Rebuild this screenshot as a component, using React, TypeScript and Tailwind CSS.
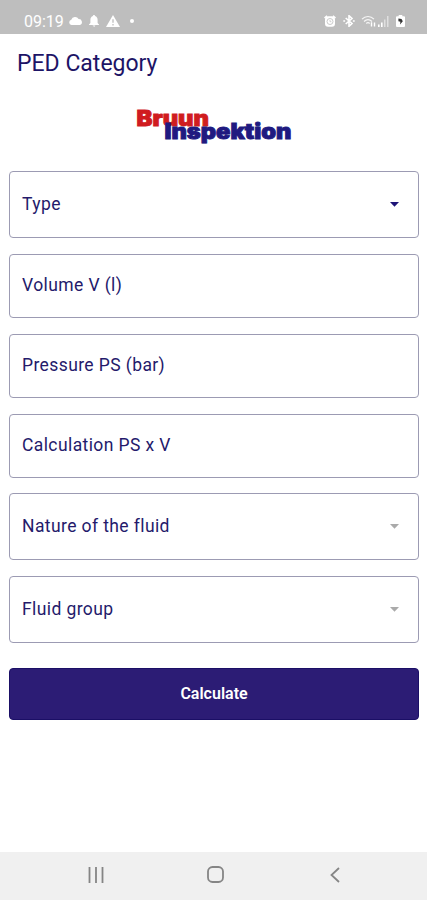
interface FieldProps {
  label: string;
  arrow?: 'active' | 'disabled';
}

function Field({ label, arrow }: FieldProps) {
  return (
    <div
      className={`flex items-center justify-between rounded border border-[#9c9bb3] bg-white pl-3 pr-[19px] ${
        arrow ? 'h-[67px]' : 'h-16'
      }`}
    >
      <span className="-mt-0.5 text-[17.5px] leading-6 tracking-[0.4px] text-[#241a6b]">{label}</span>
      {arrow && (
        <svg
          className={`h-[5px] w-[9px] ${arrow === 'active' ? 'text-[#1e1478]' : 'text-[#aaaaaa]'}`}
          viewBox="0 0 9 5"
          fill="currentColor"
        >
          <path d="M0 0h9L4.5 4.7z" />
        </svg>
      )}
    </div>
  );
}

function StatusBar() {
  return (
    <div className="flex h-[34px] items-center justify-between bg-[#bebebe] pl-6 pr-[22px] pt-2 text-white">
      <div className="flex items-center">
        <span className="mt-0.5 w-[39px] text-[16px] leading-5">09:19</span>
        <svg className="ml-[5px] h-[10px] w-[15px]" viewBox="0 0 15 10" fill="currentColor">
          <path d="M3.5 9a2.7 2.7 0 0 1-.2-5.3A4 4 0 0 1 10.6 3a3.1 3.1 0 0 1 1.3 6z" />
        </svg>
        <svg className="ml-[6px] h-3 w-[10px]" viewBox="0 0 10 12" fill="currentColor">
          <path d="M5 0c.7 0 1 .4 1 1 1.8.5 2.6 2 2.6 3.8V8L10 9.500v.5H0v-.5L1.400 8V4.800C1.400 3 2.200 1.500 4 1c0-.6.3-1 1-1zM3.700 10.600h2.600c-.2 1.600-2.400 1.600-2.600 0z" />
        </svg>
        <svg className="ml-[7px] h-3 w-[14px]" viewBox="0 0 14 12">
          <path d="M7 0l7 12H0z" fill="currentColor" />
          <path d="M7 4.200v3.600M7 9v1.400" stroke="#bebebe" strokeWidth="1.3" />
        </svg>
        <span className="ml-[10px] h-1 w-1 rounded-full bg-white" />
      </div>

      <div className="flex items-center">
        <svg className="h-3 w-3" viewBox="0 0 12 12">
          <path d="M0 2.500L2.500.3l1 1-2.500 2.200zM12 2.500L9.500.3l-1 1L11 3.500z" fill="currentColor" />
          <rect x="1" y="1.3" width="10" height="10.4" rx="3" fill="currentColor" />
          <circle cx="6" cy="6.5" r="3" fill="none" stroke="#bebebe" strokeWidth=".8" />
          <path d="M6 5v1.700h1.400" fill="none" stroke="#bebebe" strokeWidth=".7" />
        </svg>
        <svg className="ml-[7px] h-3 w-3" viewBox="0 0 12 12" fill="none" stroke="currentColor">
          <path d="M2.700 3l6.300 5.500L6 11.300V.7l3 2.800L2.700 9" strokeWidth="1.600" />
          <path d="M.3 6h1.800M9.900 6h1.800" strokeWidth="1.600" />
        </svg>
        <svg className="ml-[6px] h-3 w-4" viewBox="0 0 16 12" fill="none" stroke="currentColor">
          <path d="M1 4.200c3.300-3.600 8.700-3.600 12 0M3 6.500c2.400-2.300 5.600-2.300 8 0M5.300 8.500c1-1 2.400-1 3.400 0" strokeWidth="1.200" opacity=".85" />
          <path d="M10.500 11.500V7.300M13.500 7.500v4" strokeWidth="1.400" />
        </svg>
        <svg className="h-3 w-[13px]" viewBox="0 0 13 12" fill="currentColor">
          <path d="M1 9.500h1.600V12H1zM4 7.500h1.600V12H4z" />
          <path d="M7 4.500h1.500V12H7zM10 1h1.500v11H10z" opacity=".5" />
        </svg>
        <svg className="ml-[6px] h-3 w-[9px]" viewBox="0 0 9 12">
          <path d="M2.700 0h3.600v1.300H8q1 0 1 1V11q0 1-1 1H1q-1 0-1-1V2.300q0-1 1-1h1.700z" fill="currentColor" />
          <path d="M2.400 3.500L5.500 4l1.300 2.300L4 9.500l.4-2.700-2-.6z" fill="#333333" />
        </svg>
      </div>
    </div>
  );
}

function Logo() {
  return (
    <svg
      className="mx-auto h-10 w-[157px] overflow-visible font-['Inter','DejaVu_Sans',sans-serif] text-[21px] font-black"
      viewBox="0 0 157 40"
      strokeWidth="0.9"
    >
      <text x="1.5" y="19.2" textLength="72.500" lengthAdjust="spacingAndGlyphs" fill="#d01c1f" stroke="#d01c1f">
        Bruun
      </text>
      <text x="29.500" y="32.300" textLength="127" lengthAdjust="spacingAndGlyphs" fill="#201a80" stroke="#201a80">
        Inspektion
      </text>
    </svg>
  );
}

function NavBar() {
  return (
    <div className="flex h-12 items-center bg-[#f0f0f0] pl-[88px] text-[#858585]">
      <svg className="mt-[-3px] h-4 w-4" viewBox="0 0 16 16" stroke="currentColor" strokeWidth="1.800">
        <path d="M1.500 0v16M8 0v16M14.500 0v16" />
      </svg>
      <svg className="ml-[103px] mt-[-3px] h-[17px] w-[17px]" viewBox="0 0 17 17" fill="none" stroke="currentColor" strokeWidth="1.800">
        <rect x="1" y="1" width="15" height="15" rx="4.500" />
      </svg>
      <svg className="ml-[106px] mt-[-3px] h-4 w-[10px]" viewBox="0 0 10 16" fill="none" stroke="currentColor" strokeWidth="1.800">
        <path d="M9 1L1.500 8 9 15" />
      </svg>
    </div>
  );
}

export default function App() {
  return (
    <div className="flex h-screen w-full flex-col bg-white font-['Roboto',sans-serif]">
      <StatusBar />
      <h1 className="pl-[17px] pt-[15px] text-[23px] leading-[30px] text-[#1d1466]">
        PED Category
      </h1>
      <div className="pt-7">
        <Logo />
      </div>
      <main className="flex flex-1 flex-col gap-4 pl-[9px] pr-2 pt-6">
        <Field label="Type" arrow="active" />
        <Field label="Volume V (l)" />
        <Field label="Pressure PS (bar)" />
        <Field label="Calculation PS x V" />
        <div className="-mt-px flex flex-col gap-4">
          <Field label="Nature of the fluid" arrow="disabled" />
          <Field label="Fluid group" arrow="disabled" />
        </div>
        <button className="mt-[9px] h-[52px] rounded border border-[#1b0f66] bg-[#2c1c75] text-[16px] font-semibold text-white">
          Calculate
        </button>
      </main>
      <NavBar />
    </div>
  );
}
